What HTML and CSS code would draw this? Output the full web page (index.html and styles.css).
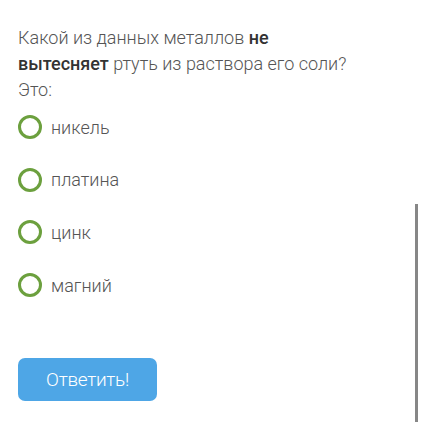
FILE: index.html
```html
<!DOCTYPE html>
<html lang="ru">
<head>
    <meta charset="UTF-8">
    <meta name="viewport" content="width=device-width, initial-scale=1.0">
    <title>Тест</title>
    <link rel="stylesheet" href="styles.css">
</head>
<body>
    <div class="page">
        <div class="quiz">
            <p class="question">Какой из данных металлов <b>не вытесняет</b> ртуть из раствора его соли? Это:</p>
            <ul class="answers">
                <li><span class="radio"></span>никель</li>
                <li><span class="radio"></span>платина</li>
                <li><span class="radio"></span>цинк</li>
                <li><span class="radio"></span>магний</li>
            </ul>
            <input type="button" value="Ответить!" class="send">
        </div>
        <div class="rail"></div>
    </div>
</body>
</html>
```

FILE: styles.css
```css
body{
    margin:0;
    background-color:#fff;
    font-family:Roboto,"Liberation Sans",sans-serif;
}
.page{
    display:flex;
    height:422px;
}
.quiz{
    flex:1;
    padding:25px 0 0 18px;
}
.question{
    margin:0;
    width:340px;
    font-size:18px;
    font-weight:300;
    line-height:26px;
    color:#555;
}
.question b{
    font-weight:500;
    color:#333;
}
.answers{
    list-style:none;
    margin:-2px 0 0;
    padding:0;
}
.answers li{
    display:flex;
    align-items:center;
    gap:9px;
    height:52.6px;
    font-size:18px;
    font-weight:300;
    color:#555;
}
/* 圆形单选框 */
.radio{
    width:18px;
    height:18px;
    border:3px solid #6ca03e;
    border-radius:50%;
}
.send{
    display:block;
    margin-top:47px;
    width:139px;
    height:43px;
    border:0;
    border-radius:7px;
    background-color:#4ea6e6;
    color:#fff;
    font-family:Roboto,"Liberation Sans",sans-serif;
    font-size:19px;
    font-weight:300;
    letter-spacing:-0.3px;
    outline:none;
    cursor:pointer;
}
.rail{
    width:3px;
    margin:204px 4px 0 0;
    background-color:#878787;
}
```
